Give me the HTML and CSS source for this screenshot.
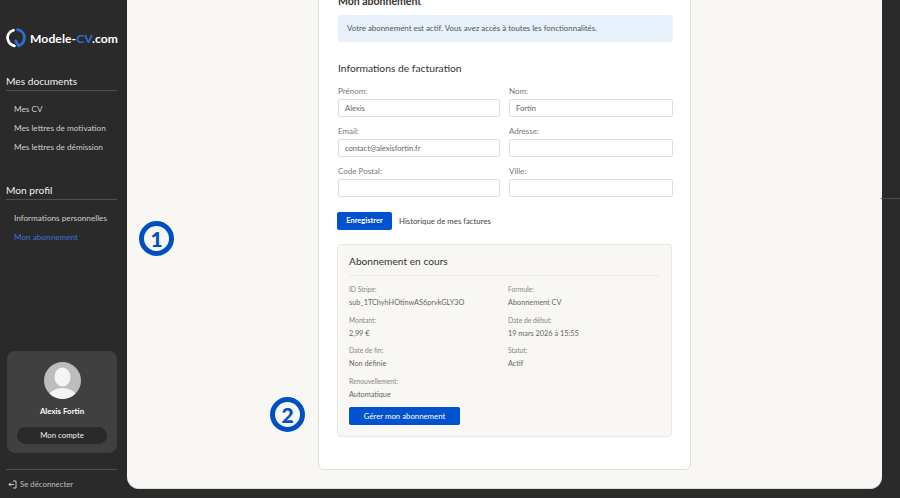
FILE: index.html
```html
<!DOCTYPE html>
<html lang="fr">
<head>
<meta charset="utf-8">
<title>Mon abonnement</title>
<link rel="stylesheet" href="styles.css">
</head>
<body>
<div class="app">
  <aside class="sidebar">
    <div class="logo">
      <svg class="logo-mark" viewBox="0 0 20 20" width="20" height="20" fill="none" stroke-width="2.7" stroke-linecap="round"><path d="M7.5 2.2 C2.6 3.4 0.9 8 1.9 11.6 C2.7 14.6 5 17 8.4 17.9" stroke="#fff"/><path d="M11.4 1.6 C16 2.2 18.6 6 18.4 10 C18.3 13.6 15.8 16.6 12.6 17.8 L9.6 12.8" stroke="#2f6fd8"/></svg>
      <span class="logo-text">Modele-<span class="logo-accent">CV</span>.com</span>
    </div>
    <section class="nav-group first">
      <h2 class="nav-title">Mes documents</h2>
      <a class="nav-link">Mes CV</a>
      <a class="nav-link">Mes lettres de motivation</a>
      <a class="nav-link">Mes lettres de démission</a>
    </section>
    <section class="nav-group second">
      <h2 class="nav-title">Mon profil</h2>
      <a class="nav-link">Informations personnelles</a>
      <a class="nav-link active">Mon abonnement</a>
    </section>
    <div class="profile">
      <svg class="avatar" viewBox="0 0 37 37" width="37" height="37"><defs><clipPath id="av"><circle cx="18.5" cy="18.5" r="18.5"/></clipPath></defs><circle cx="18.5" cy="18.5" r="18.5" fill="#bdbdbd"/><g clip-path="url(#av)" fill="#f4f4f4"><ellipse cx="18.5" cy="15" rx="8" ry="9.5"/><ellipse cx="18.5" cy="35" rx="14" ry="9"/></g></svg>
      <div class="profile-name">Alexis Fortin</div>
      <div class="profile-btn">Mon compte</div>
    </div>
    <div class="logout">
      <svg viewBox="0 0 9 9" width="9" height="9" fill="none" stroke="#ddd" stroke-width="0.9"><path d="M5 1 H8 V8 H5"/><path d="M6 4.5 H1 M2.8 2.7 L1 4.5 L2.8 6.3"/></svg>
      <span>Se déconnecter</span>
    </div>
  </aside>
  <main class="main">
    <div class="card">
      <h1 class="page-title">Mon abonnement</h1>
      <div class="alert">Votre abonnement est actif. Vous avez accès à toutes les fonctionnalités.</div>
      <h2 class="section-title">Informations de facturation</h2>
      <form class="form-grid">
        <label class="field"><span class="field-label">Prénom:</span><span class="input">Alexis</span></label>
        <label class="field"><span class="field-label">Nom:</span><span class="input">Fortin</span></label>
        <label class="field"><span class="field-label">Email:</span><span class="input">contact@alexisfortin.fr</span></label>
        <label class="field"><span class="field-label">Adresse:</span><span class="input"></span></label>
        <label class="field"><span class="field-label">Code Postal:</span><span class="input"></span></label>
        <label class="field"><span class="field-label">Ville:</span><span class="input"></span></label>
      </form>
      <div class="actions">
        <span class="btn btn-save">Enregistrer</span>
        <a class="history">Historique de mes factures</a>
      </div>
      <div class="sub-box">
        <h3 class="sub-title">Abonnement en cours</h3>
        <dl class="sub-grid">
          <div class="item"><dt>ID Stripe:</dt><dd>sub_1TChyhHOtinwAS6prvkGLY3O</dd></div>
          <div class="item"><dt>Formule:</dt><dd>Abonnement CV</dd></div>
          <div class="item"><dt>Montant:</dt><dd>2,99 €</dd></div>
          <div class="item"><dt>Date de début:</dt><dd>19 mars 2026 à 15:55</dd></div>
          <div class="item"><dt>Date de fin:</dt><dd>Non définie</dd></div>
          <div class="item"><dt>Statut:</dt><dd>Actif</dd></div>
          <div class="item"><dt>Renouvellement:</dt><dd>Automatique</dd></div>
        </dl>
        <span class="btn btn-manage">Gérer mon abonnement</span>
      </div>
    </div>
  </main>
</div>
<div class="marker marker-1">1</div>
<div class="marker marker-2">2</div>
<div class="seam"></div>
</body>
</html>
```
FILE: styles.css
```css
* { box-sizing: border-box; }
html, body { margin: 0; height: 100%; overflow: hidden; }
body { background: #2a2a2a; font-family: "Lato", "Liberation Sans", sans-serif; color: #333; }
.app { display: flex; width: 900px; height: 498px; }

.sidebar { width: 127px; flex: none; display: flex; flex-direction: column; padding: 0 10px 0 6px; color: #e4e4e4; }
.logo { display: flex; align-items: center; gap: 4px; margin-top: 28px; height: 20px; }
.logo-mark { flex: none; }
.logo-text { font-size: 12.1px; font-weight: 700; color: #fff; letter-spacing: 0.1px; white-space: nowrap; }
.logo-accent { color: #2f6fd8; }
.nav-group.first { margin-top: 27px; }
.nav-group.second { margin-top: 28px; }
.nav-title { margin: 0 0 8px; padding-bottom: 2px; height: 16px; line-height: 13px; font-size: 10.2px; font-weight: 400; color: #f0f0f0; border-bottom: 1px solid #505050; }
.nav-link { display: block; height: 19px; line-height: 20px; padding-left: 8px; font-size: 8.2px; color: #cfcfcf; white-space: nowrap; }
.nav-link.active { color: #3f6fd8; }

.profile { margin: auto 0 0 1px; width: 110px; height: 102px; background: #404040; border-radius: 8px; display: flex; flex-direction: column; align-items: center; padding-top: 11px; }
.profile-name { margin-top: 6px; font-size: 7.9px; font-weight: 700; color: #fff; line-height: 12px; }
.profile-btn { margin-top: 10px; width: 90px; height: 17px; line-height: 17px; border-radius: 9px; background: #2a2a2a; color: #eee; text-align: center; font-size: 7.8px; }
.logout { margin-top: 16px; margin-bottom: 8px; padding-top: 8px; border-top: 1px solid #505050; display: flex; align-items: center; gap: 3px; padding-left: 2px; font-size: 7.8px; color: #bfbfbf; white-space: nowrap; box-sizing: content-box; height: 12px; }

.main { width: 755px; height: 489px; flex: none; background: #f8f7f3; border-radius: 0 0 12px 12px; overflow: hidden; border-bottom: 1px solid #ddd; }
.card { margin: -10px 0 0 191px; width: 373px; height: 480px; padding: 0 17px 0 19px; background: #fff; border: 1px solid #dcdcdc; border-radius: 0 0 6px 6px; }

.page-title { margin: 0; font-size: 10.5px; line-height: 20px; font-weight: 700; color: #333; }
.alert { margin-top: 4px; height: 27px; line-height: 27px; padding-left: 9px; background: #e8f1fb; border-radius: 3px; font-size: 7.9px; color: #555; }
.section-title { margin: 18px 0 0; font-size: 10.3px; line-height: 16px; font-weight: 400; color: #333; }

.form-grid { display: grid; grid-template-columns: 162px 164px; column-gap: 9px; row-gap: 8px; margin-top: 9px; }
.field { display: block; }
.field-label { display: block; height: 14px; line-height: 13px; font-size: 8px; color: #777; }
.input { display: block; height: 18px; line-height: 16px; padding-left: 6px; background: #fff; border: 1px solid #dedede; border-radius: 2px; font-size: 7.6px; color: #666; }

.actions { display: flex; align-items: center; gap: 7px; margin: 15px 0 0 -1px; }
.btn { display: block; background: #0052d0; color: #fff; border-radius: 2px; text-align: center; height: 18px; line-height: 18px; }
.btn-save { width: 55px; font-size: 7.5px; font-weight: 700; }
.history { font-size: 7.8px; color: #444; white-space: nowrap; }

.sub-box { margin: 14px 0 0 -1px; width: 335px; height: 193px; background: #f8f7f3; border: 1px solid #e8e8e6; border-radius: 3px; padding: 0 11px; }
.sub-title { margin: 0; padding-top: 9px; height: 31px; line-height: 15px; font-size: 10.2px; font-weight: 400; color: #333; border-bottom: 1px solid #ebebe8; }
.sub-grid { display: grid; grid-template-columns: 159px 1fr; margin: 0; padding-top: 8px; }
.item { height: 30.5px; }
dt { font-size: 6.7px; line-height: 11px; color: #888; }
dd { margin: 2px 0 0; font-size: 7.3px; line-height: 12px; color: #666; white-space: nowrap; }
.btn-manage { width: 111px; margin-top: 1px; font-size: 7.8px; }

.marker { position: absolute; width: 35px; height: 35px; border: 5px solid #0050c4; border-radius: 50%; background: #f8f7f3; color: #0050c4; font-size: 21px; font-weight: 900; line-height: 25px; text-align: center; }
.marker-1 { left: 139px; top: 221px; }
.marker-2 { left: 270px; top: 397px; }
.seam { position: absolute; left: 881px; top: 198px; width: 19px; height: 1px; background: #4c4c4c; }
```
